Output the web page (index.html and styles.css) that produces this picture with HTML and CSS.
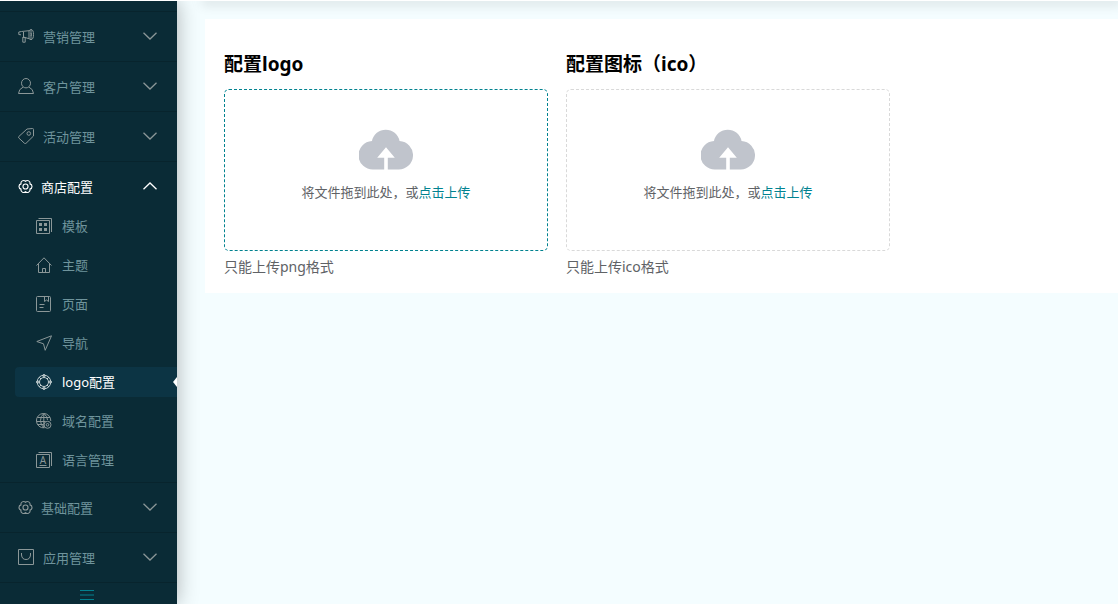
FILE: index.html
```html
<!DOCTYPE html>
<html lang="zh-CN">
<head>
<meta charset="utf-8">
<meta name="viewport" content="width=device-width, initial-scale=1">
<title>logo配置</title>
<link rel="stylesheet" href="styles.css">
</head>
<body>
<svg class="sprite" aria-hidden="true">
  <symbol id="down" viewBox="0 0 14 8"><path d="M.5.800 7 7 13.500.800"/></symbol>
  <symbol id="gear" viewBox="0 0 16 16"><path d="M8 2.400A2.900 2.900 0 0 1 12.800 5.200A2.900 2.900 0 0 1 12.800 10.800A2.900 2.900 0 0 1 8 13.600A2.900 2.900 0 0 1 3.200 10.800A2.900 2.900 0 0 1 3.200 5.200A2.900 2.900 0 0 1 8 2.400z"/><circle cx="8" cy="8" r="2.700"/></symbol>
  <symbol id="cloud" viewBox="0 0 54 41"><path fill-rule="evenodd" d="M13 12a14 14 0 0 1 27.500 0A14.200 14.200 0 0 1 39 40.500H28.800V28.800h7L27 18.300l-8.800 10.500h7v11.700H14.500A14.200 14.200 0 0 1 13 12z"/></symbol>
</svg>
<div class="layout">
  <aside class="sidebar">
    <nav class="menu">
      <button class="group" type="button">
        <svg class="icon" viewBox="0 0 17 16"><path d="M3.500 3.500 11 2.700v8L5.500 9M3.500 3.500.8 4v2.500L3 6.800M5.500 4v5.500M4.500 9.500h2.700v4.700H4.800V9.500M11 2.700 13 1.500v10.200l-2-1M13 1.500q2.500.2 2.500 5T13 11.700M13 5q1 1.500 0 3"/></svg>
        <span class="label">营销管理</span><svg class="chevron"><use href="#down"/></svg>
      </button>
      <button class="group" type="button">
        <svg class="icon" viewBox="0 0 17 16"><ellipse cx="8" cy="5.200" rx="4.500" ry="4.700"/><path d="M5 9.200Q.8 11 .5 15.500h15Q15.200 11 11 9.200"/></svg>
        <span class="label">客户管理</span><svg class="chevron"><use href="#down"/></svg>
      </button>
      <button class="group" type="button">
        <svg class="icon" viewBox="0 0 17 16"><path d="m9 1 5.500-.5q1 0 1 1V8l-7.500 7.300q-.8.500-1.500 0L.8 10q-.6-.8 0-1.500z"/><circle cx="10.800" cy="5.500" r="1.800"/></svg>
        <span class="label">活动管理</span><svg class="chevron"><use href="#down"/></svg>
      </button>
      <button class="group open" type="button" aria-expanded="true">
        <svg class="icon gear"><use href="#gear"/></svg>
        <span class="label">商店配置</span><svg class="chevron"><use href="#down"/></svg>
      </button>
      <div class="submenu">
        <a class="item" href="#"><svg class="subicon" viewBox="0 0 16 16"><path d="M.5 2.500h13v13H.5zM2.500.5h13v13.500"/><path class="solid" d="M3 5h3v3H3zM8 5h3v3H8zM3 10h3v3H3zM8 10h3v3H8z"/></svg>模板</a>
        <a class="item" href="#"><svg class="subicon" viewBox="0 0 16 16"><path d="M.5 8.500 8 .8l7.500 7.700M2.500 7v8.500h11V7M6.500 15.500v-4h3v4"/></svg>主题</a>
        <a class="item" href="#"><svg class="subicon" viewBox="0 0 16 16"><rect x=".5" y=".5" width="14" height="15" rx="1"/><path d="M8.500.5v5l2-1.500 2 1.500v-5M3.500 8.500h5M3.500 11.500h4"/></svg>页面</a>
        <a class="item" href="#"><svg class="subicon" viewBox="0 0 16 16"><path d="M.8 6.500 15.500.8 9.200 15.300 7.500 8.800z"/></svg>导航</a>
        <a class="item current" href="#" aria-current="page"><svg class="subicon" viewBox="0 0 16 16"><circle cx="8" cy="8" r="6.800"/><circle cx="8" cy="8" r="4.500"/><circle cx="8" cy="1.700" r="1.200"/><circle cx="8" cy="14.300" r="1.200"/><circle cx="1.700" cy="8" r="1.200"/><circle cx="14.300" cy="8" r="1.200"/><path d="M3.200 3.200 5 5M12.800 3.200 11 5M3.200 12.800 5 11M12.800 12.800 11 11"/></svg>logo配置</a>
        <a class="item" href="#"><svg class="subicon" viewBox="0 0 16 16"><path d="M8.500 14.800A7.200 7.200 0 1 1 14.800 8M8 .5Q4.500 3 4.500 7.500T8 15M8 .5q3.500 3 3.500 6.500M7.800.5v14M1.500 4.500h12.500M.5 8.500h9M1.500 11.500h6"/><circle cx="11.500" cy="11.800" r="3.500"/><circle cx="11.500" cy="11.800" r="1.300"/></svg>域名配置</a>
        <a class="item" href="#"><svg class="subicon" viewBox="0 0 16 16"><path d="M.5 2.500h13v13H.5zM2.500.5h13v13.500M3.500 13.500h7"/><text x="7" y="12" text-anchor="middle">A</text></svg>语言管理</a>
      </div>
      <button class="group" type="button">
        <svg class="icon gear"><use href="#gear"/></svg>
        <span class="label">基础配置</span><svg class="chevron"><use href="#down"/></svg>
      </button>
      <button class="group" type="button">
        <svg class="icon" viewBox="0 0 17 16"><path d="M.5.500h15v15H.5zM3.500 4v2q.5 4.500 4.500 4.500T12.500 6V4"/></svg>
        <span class="label">应用管理</span><svg class="chevron"><use href="#down"/></svg>
      </button>
    </nav>
    <button class="collapse" type="button" aria-label="收起菜单"><svg viewBox="0 0 14 10"><path d="M0 .5h14M0 5h14M0 9.500h14"/></svg></button>
  </aside>
  <div class="content">
    <header class="topbar"></header>
    <main class="panel">
      <section class="field">
        <h3>配置logo</h3>
        <label class="drop hot">
          <input type="file" accept="image/png">
          <svg class="cloud"><use href="#cloud"/></svg>
          <span>将文件拖到此处，或<em>点击上传</em></span>
        </label>
        <p class="tip">只能上传png格式</p>
      </section>
      <section class="field">
        <h3>配置图标（ico）</h3>
        <label class="drop">
          <input type="file" accept=".ico">
          <svg class="cloud"><use href="#cloud"/></svg>
          <span>将文件拖到此处，或<em>点击上传</em></span>
        </label>
        <p class="tip">只能上传ico格式</p>
      </section>
    </main>
  </div>
</div>
</body>
</html>
```
FILE: styles.css
```css
* { box-sizing: border-box; }
body {
  margin: 0;
  border-top: 1px solid #fff;
  background: #f4fdff;
  font-family: "Noto Sans", "Noto Sans CJK SC", sans-serif;
  font-size: 13px;
  color: #606266;
}
button { font: inherit; border: 0; background: none; cursor: pointer; }
.sprite { position: absolute; width: 0; height: 0; }
.layout { display: flex; min-height: calc(100vh - 1px); overflow: hidden; }

.sidebar {
  flex: none;
  width: 177px;
  display: flex;
  flex-direction: column;
  padding-top: 10px;
  background: #0a2b36;
  box-shadow: 0 0 20px rgba(0, 0, 0, .3);
  z-index: 1;
}
.sidebar svg { fill: none; stroke: currentColor; flex: none; }
.menu { display: flex; flex-direction: column; }
.group {
  display: flex;
  align-items: center;
  gap: 8px;
  height: 50px;
  padding: 0 20px 1px 18px;
  border-top: 1px solid #08242d;
  color: #8b9798;
  text-align: left;
}
.label { flex: 1; color: #6f949c; }
.icon { width: 17px; height: 16px; }
.sidebar .gear { width: 15px; height: 15px; stroke-width: 1.2; }
.sidebar .chevron { width: 14px; height: 8px; stroke-width: 1.3; }
.open, .open .label { color: #fff; }
.open .chevron { transform: rotate(180deg); }

.submenu { display: flex; flex-direction: column; gap: 9px; padding: 0 0 7px 15px; }
.item {
  position: relative;
  display: flex;
  align-items: center;
  gap: 10px;
  height: 30px;
  padding-left: 21px;
  border-radius: 4px 0 0 4px;
  line-height: 16px;
  color: #6f949c;
  text-decoration: none;
}
.subicon { width: 16px; height: 16px; color: #8b9798; }
.sidebar .solid { fill: currentColor; stroke: none; }
.subicon text { font-size: 10px; fill: currentColor; stroke: none; }
.current { background: #0c3444; color: #fff; }
.current .subicon { color: #c4d0d2; }
.current::after {
  content: "";
  position: absolute;
  right: 0;
  top: 10px;
  border: 5px solid transparent;
  border-left-width: 0;
  border-right: 4px solid #fff;
}
.collapse {
  flex: 1;
  display: flex;
  align-items: center;
  justify-content: center;
  padding: 2px 3px 0 0;
  border-top: 1px solid #08242d;
  color: #02818f;
}
.collapse svg { width: 14px; height: 10px; }

.content { flex: 1; min-width: 0; }
.topbar { height: 0; margin-left: 28px; box-shadow: 0 0 12px 4px rgba(0, 0, 0, .12); }
.panel {
  display: flex;
  gap: 18px;
  margin: 18px 0 0 28px;
  padding: 31px 19px 16px;
  background: #fff;
}
.field { flex: 0 1 324px; }
h3 { margin: 0 0 11px; font-size: 19px; line-height: 28px; color: #000; }
.drop {
  display: flex;
  flex-direction: column;
  align-items: center;
  gap: 12px;
  height: 162px;
  padding-top: 39px;
  border: 1px dashed #d9d9d9;
  border-radius: 5px;
  line-height: 20px;
  cursor: pointer;
}
.drop input { position: absolute; width: 1px; height: 1px; opacity: 0; }
.hot { border-color: #01828f; }
.cloud { width: 54px; height: 41px; fill: #c0c4cc; }
em { font-style: normal; color: #01828f; }
.tip { margin: 6px 0 0; font-size: 14px; line-height: 20px; }
```
